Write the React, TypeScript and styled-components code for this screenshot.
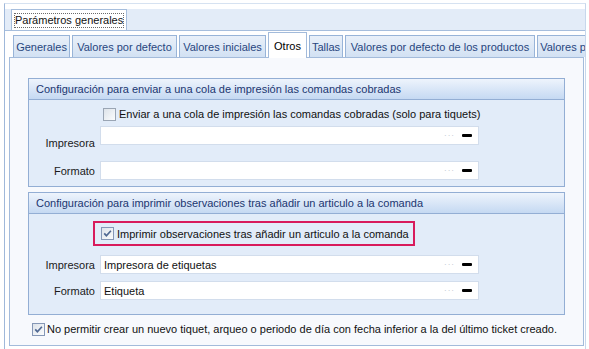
import styled, { createGlobalStyle } from "styled-components";

const GlobalStyle = createGlobalStyle`
    html, body {
        margin: 0;
        padding: 0;
        background: #ffffff;
    }
    body {
        font-family: "Liberation Sans", Arial, sans-serif;
        font-size: 11px;
        color: #111;
    }
    * {
        box-sizing: border-box;
    }
`;

const Screen = styled.div`
    width: 589px;
    height: 349px;
    padding-top: 3px;
    background: #ffffff;
    overflow: hidden;
`;

const Frame = styled.div`
    margin-left: 4px;
    width: 582px;
    height: 346px;
    padding-top: 5px;
    border-top: 1px solid #d6e2f1;
    border-left: 1px solid #9fb8da;
    border-right: 1px solid #c7d7ec;
    overflow: hidden;
    display: flex;
    flex-direction: column;
`;

const TopStrip = styled.div`
    height: 22px;
    padding-left: 6px;
    background: #e3ecf8;
    border-bottom: 1px solid #a6bedd;
    display: flex;
    align-items: flex-end;
`;

const TopTab = styled.div`
    height: 21px;
    padding: 0 2px;
    background: #ffffff;
    border: 1px solid #a6bedd;
    border-bottom: none;
    display: flex;
    align-items: center;
`;

const FocusLabel = styled.span`
    padding: 1px 1px 2px;
    outline: 1px dotted #6b6b6b;
    outline-offset: -1px;
    color: #111;
    white-space: nowrap;
`;

const Body = styled.div`
    padding: 0 1px 0 4px;
`;

const TabRow = styled.div`
    height: 26px;
    padding-left: 4px;
    display: flex;
    align-items: flex-end;
    gap: 2px;
`;

const Tab = styled.div<{ $w: number; $active?: boolean }>`
    flex-shrink: 0;
    width: ${(p) => p.$w}px;
    height: ${(p) => (p.$active ? 26 : 22)}px;
    margin-bottom: ${(p) => (p.$active ? -1 : 0)}px;
    position: relative;
    z-index: ${(p) => (p.$active ? 1 : 0)};
    display: flex;
    align-items: center;
    justify-content: center;
    padding: ${(p) => (p.$active ? "0 3px" : "1px 3px 0")};
    white-space: nowrap;
    border: 1px solid ${(p) => (p.$active ? "#a3bbdb" : "#98b4d8")};
    border-bottom: none;
    background: ${(p) => (p.$active ? "#ffffff" : "linear-gradient(#e9f0f9, #d2e1f3)")};
    color: ${(p) => (p.$active ? "#000" : "#28467e")};
`;

const Panel = styled.div`
    height: 289px;
    padding: 20px 18px 0;
    background: #f7f9fd;
    border: 1px solid #a3bbdb;
    display: flex;
    flex-direction: column;
`;

const Group = styled.div<{ $gap?: number }>`
    margin-top: ${(p) => p.$gap ?? 0}px;
    border: 1px solid #93aed4;
    background: #e2ecf9;
`;

const GroupHeader = styled.div`
    height: 21px;
    padding-left: 7px;
    border-bottom: 1px solid #93aed4;
    background: linear-gradient(#eef4fc, #c5d9f2);
    color: #1b3670;
    display: flex;
    align-items: center;
    white-space: nowrap;
`;

const GroupBody = styled.div<{ $top: number; $bottom: number }>`
    padding: ${(p) => p.$top}px 0 ${(p) => p.$bottom}px;
    display: flex;
    flex-direction: column;
`;

const CheckRow = styled.div<{ $indent: number }>`
    height: 16px;
    margin-left: ${(p) => p.$indent}px;
    display: flex;
    align-items: center;
    gap: 3px;
    white-space: nowrap;
`;

const Highlight = styled.div`
    margin-left: 64px;
    width: 322px;
    height: 25px;
    padding-left: 6px;
    border: 2px solid #d81b5c;
    display: flex;
    align-items: center;
    gap: 3px;
    white-space: nowrap;
`;

const Box = styled.span<{ $checked?: boolean }>`
    width: 13px;
    height: 13px;
    flex-shrink: 0;
    border: 1px solid ${(p) => (p.$checked ? "#8597b6" : "#9aa5b4")};
    background: linear-gradient(135deg, #dde3ea, #fbfcfd);
    display: flex;
    align-items: center;
    justify-content: center;
`;

const FieldRow = styled.div<{ $gap: number }>`
    margin-top: ${(p) => p.$gap}px;
    height: 19px;
    display: flex;
    align-items: center;
    gap: 5px;
`;

const FieldLabel = styled.span<{ $drop?: number }>`
    width: 66px;
    text-align: right;
    color: #1a1a1a;
    margin-top: ${(p) => p.$drop ?? 0}px;
    margin-bottom: ${(p) => -(p.$drop ?? 0)}px;
`;

const Field = styled.div`
    width: 379px;
    height: 19px;
    padding: 0 6px 0 3px;
    background: #ffffff;
    border: 1px solid #d2ddec;
    display: flex;
    align-items: center;
`;

const FieldValue = styled.span`
    flex: 1;
    color: #111;
    white-space: nowrap;
`;

const Ellipsis = styled.span`
    color: #b3bcc9;
    font-size: 8px;
    letter-spacing: 1px;
    margin-right: 7px;
`;

const Dash = styled.span`
    width: 10px;
    height: 3px;
    border-radius: 1px;
    background: #000;
`;

const Footer = styled.div`
    margin-top: 6px;
    margin-left: 4px;
    height: 16px;
    display: flex;
    align-items: center;
    gap: 2px;
    white-space: nowrap;
    color: #111;
`;

function CheckBox({ checked }: { checked?: boolean }) {
    return (
        <Box $checked={checked}>
            {checked && (
                <svg width="11" height="11" viewBox="0 0 11 11">
                    <path d="M2.2 5.4 L4.4 7.7 L8.9 2.8" fill="none" stroke="#4f6892" strokeWidth="1.7" />
                </svg>
            )}
        </Box>
    );
}

function LookupField({ label, value, drop, gap }: { label: string; value?: string; drop?: number; gap: number }) {
    return (
        <FieldRow $gap={gap}>
            <FieldLabel $drop={drop}>{label}</FieldLabel>
            <Field>
                <FieldValue>{value}</FieldValue>
                <Ellipsis>···</Ellipsis>
                <Dash />
            </Field>
        </FieldRow>
    );
}

// the last tab is cut by the window edge in the original, so only its visible part is listed
const tabs = [
    { label: "Generales", w: 57 },
    { label: "Valores por defecto", w: 105 },
    { label: "Valores iniciales", w: 87 },
    { label: "Otros", w: 39, active: true },
    { label: "Tallas", w: 34 },
    { label: "Valores por defecto de los productos", w: 190 },
    { label: "Valores p", w: 52 }
];

export default function App() {
    return (
        <>
            <GlobalStyle />
            <Screen>
                <Frame>
                    <TopStrip>
                        <TopTab>
                            <FocusLabel>Parámetros generales</FocusLabel>
                        </TopTab>
                    </TopStrip>
                    <Body>
                        <TabRow>
                            {tabs.map((t) => (
                                <Tab key={t.label} $w={t.w} $active={t.active}>
                                    {t.label}
                                </Tab>
                            ))}
                        </TabRow>
                        <Panel>
                            <Group>
                                <GroupHeader>Configuración para enviar a una cola de impresión las comandas cobradas</GroupHeader>
                                <GroupBody $top={6} $bottom={6}>
                                    <CheckRow $indent={74}>
                                        <CheckBox />
                                        <span>Enviar a una cola de impresión las comandas cobradas (solo para tiquets)</span>
                                    </CheckRow>
                                    <LookupField label="Impresora" drop={7} gap={4} />
                                    <LookupField label="Formato" gap={16} />
                                </GroupBody>
                            </Group>
                            <Group $gap={5}>
                                <GroupHeader>Configuración para imprimir observaciones tras añadir un articulo a la comanda</GroupHeader>
                                <GroupBody $top={7} $bottom={14}>
                                    <Highlight>
                                        <CheckBox checked />
                                        <span>Imprimir observaciones tras añadir un articulo a la comanda</span>
                                    </Highlight>
                                    <LookupField label="Impresora" value="Impresora de etiquetas" gap={9} />
                                    <LookupField label="Formato" value="Etiqueta" gap={7} />
                                </GroupBody>
                            </Group>
                            <Footer>
                                <CheckBox checked />
                                <span>No permitir crear un nuevo tiquet, arqueo o periodo de día con fecha inferior a la del último ticket creado.</span>
                            </Footer>
                        </Panel>
                    </Body>
                </Frame>
            </Screen>
        </>
    );
}
